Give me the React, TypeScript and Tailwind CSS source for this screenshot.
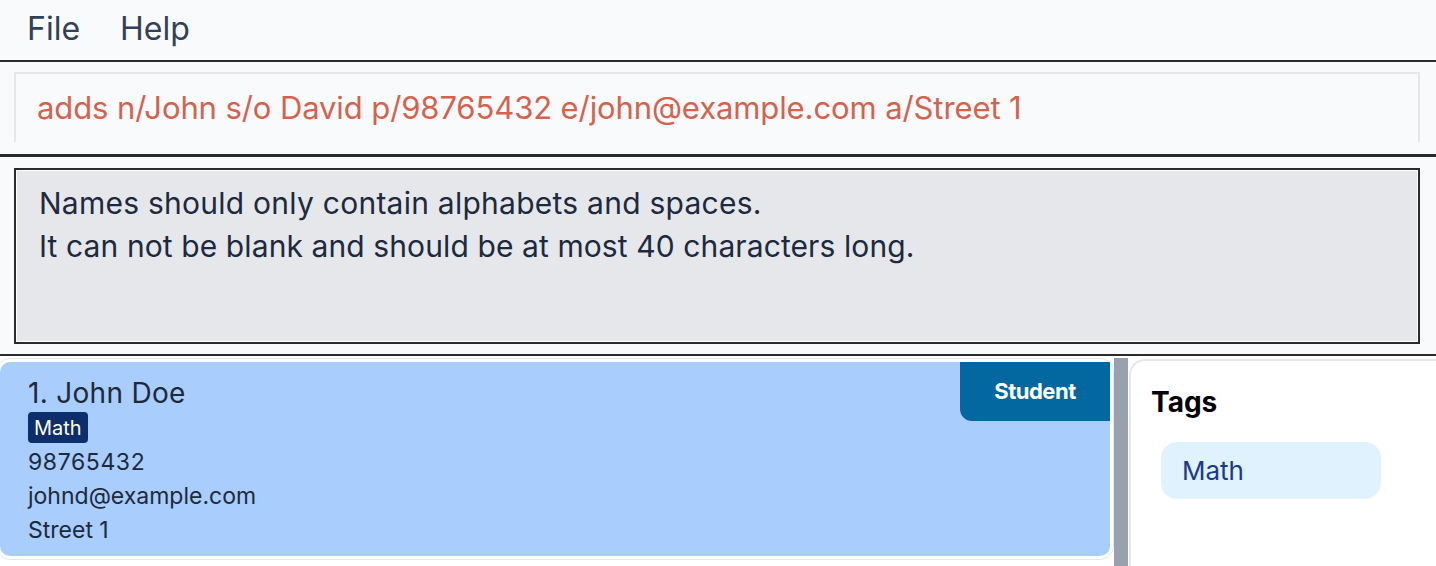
import React from 'react';

const person = {
  index: 1,
  name: 'John Doe',
  tags: ['Math'],
  phone: '98765432',
  email: 'johnd@example.com',
  address: 'Street 1',
  role: 'Student',
};

const App = () => {
  return (
    <div className="w-[1436px] h-[566px] overflow-hidden bg-gray-50 font-['Inter','Noto_Sans',sans-serif] text-slate-800">
      {/* Menu bar */}
      <div className="h-[62px] flex items-center gap-[40px] px-[27px] pb-[2px] border-b-2 border-[#2b2b2b] text-[32px] text-slate-700">
        <span>File</span>
        <span>Help</span>
      </div>

      {/* Command box */}
      <div className="h-[95px] pt-[10px] pl-[14px] pr-[16px] border-b-[3px] border-[#2b2b2b]">
        <div className="h-[70px] flex items-center border-2 border-b-0 border-gray-200 pl-[21px] text-[31px] text-[#d4624f] tracking-[-0.1px]">
          adds n/John s/o David p/98765432 e/john@example.com a/Street 1
        </div>
      </div>

      {/* Result display */}
      <div className="h-[199px] pt-[11px] pl-[14px] pr-[16px] border-b-2 border-[#2b2b2b]">
        <div className="h-[176px] border-2 border-[#2b2b2b] bg-gray-200 shadow-[inset_0_0_0_1px_#ffffff] pl-[23px] pt-[12px] text-[30px] leading-[43px] tracking-[0.1px]">
          <p className="tracking-[0.25px]">Names should only contain alphabets and spaces.</p>
          <p>It can not be blank and should be at most 40 characters long.</p>
        </div>
      </div>

      {/* Lower area */}
      <div className="h-[210px] flex bg-white">
        {/* Person list */}
        <div className="w-[1114px] overflow-hidden">
          <div className="ml-[-4px] mt-[2px] w-[1118px] rounded-[14px] border border-blue-100 p-[3px]">
            <div className="relative h-[194px] rounded-[10px] rounded-tr-none bg-[#a9cdfc] pl-[28px] pt-[13px]">
              <div className="absolute top-0 right-0 w-[150px] h-[59px] rounded-bl-[12px] bg-[#02689f] flex items-center justify-center text-white font-bold text-[22px] tracking-[-0.5px]">
                {person.role}
              </div>
              <div className="text-[28px] leading-[36px] text-slate-800 tracking-[0.3px]">
                {person.index}. {person.name}
              </div>
              <div className="flex gap-2 mt-px">
                {person.tags.map(tag => (
                  <span key={tag} className="h-[31px] px-[6px] flex items-center rounded-[4px] bg-[#0d2d6b] text-white text-[20px]">
                    {tag}
                  </span>
                ))}
              </div>
              <div className="mt-[2px] text-[23px] leading-[34px] text-slate-800">
                <p className="tracking-[0.6px]">{person.phone}</p>
                <p>{person.email}</p>
                <p>{person.address}</p>
              </div>
            </div>
          </div>
        </div>

        {/* Scrollbar */}
        <div className="w-[14px] mt-[2px] bg-gray-400" />

        {/* Tags panel */}
        <div className="flex-1 mt-[3px] ml-px border-l-2 border-t-2 border-gray-200 rounded-tl-[16px] pl-[20px] pt-[23px]">
          <h2 className="text-[28px] leading-[36px] font-bold text-black">Tags</h2>
          <div className="mt-[22px] ml-[10px] w-[220px] h-[57px] rounded-[16px] bg-sky-100 flex items-center pl-[21px] text-[26px] text-blue-900">
            Math
          </div>
        </div>
      </div>
    </div>
  );
};

export default App;
